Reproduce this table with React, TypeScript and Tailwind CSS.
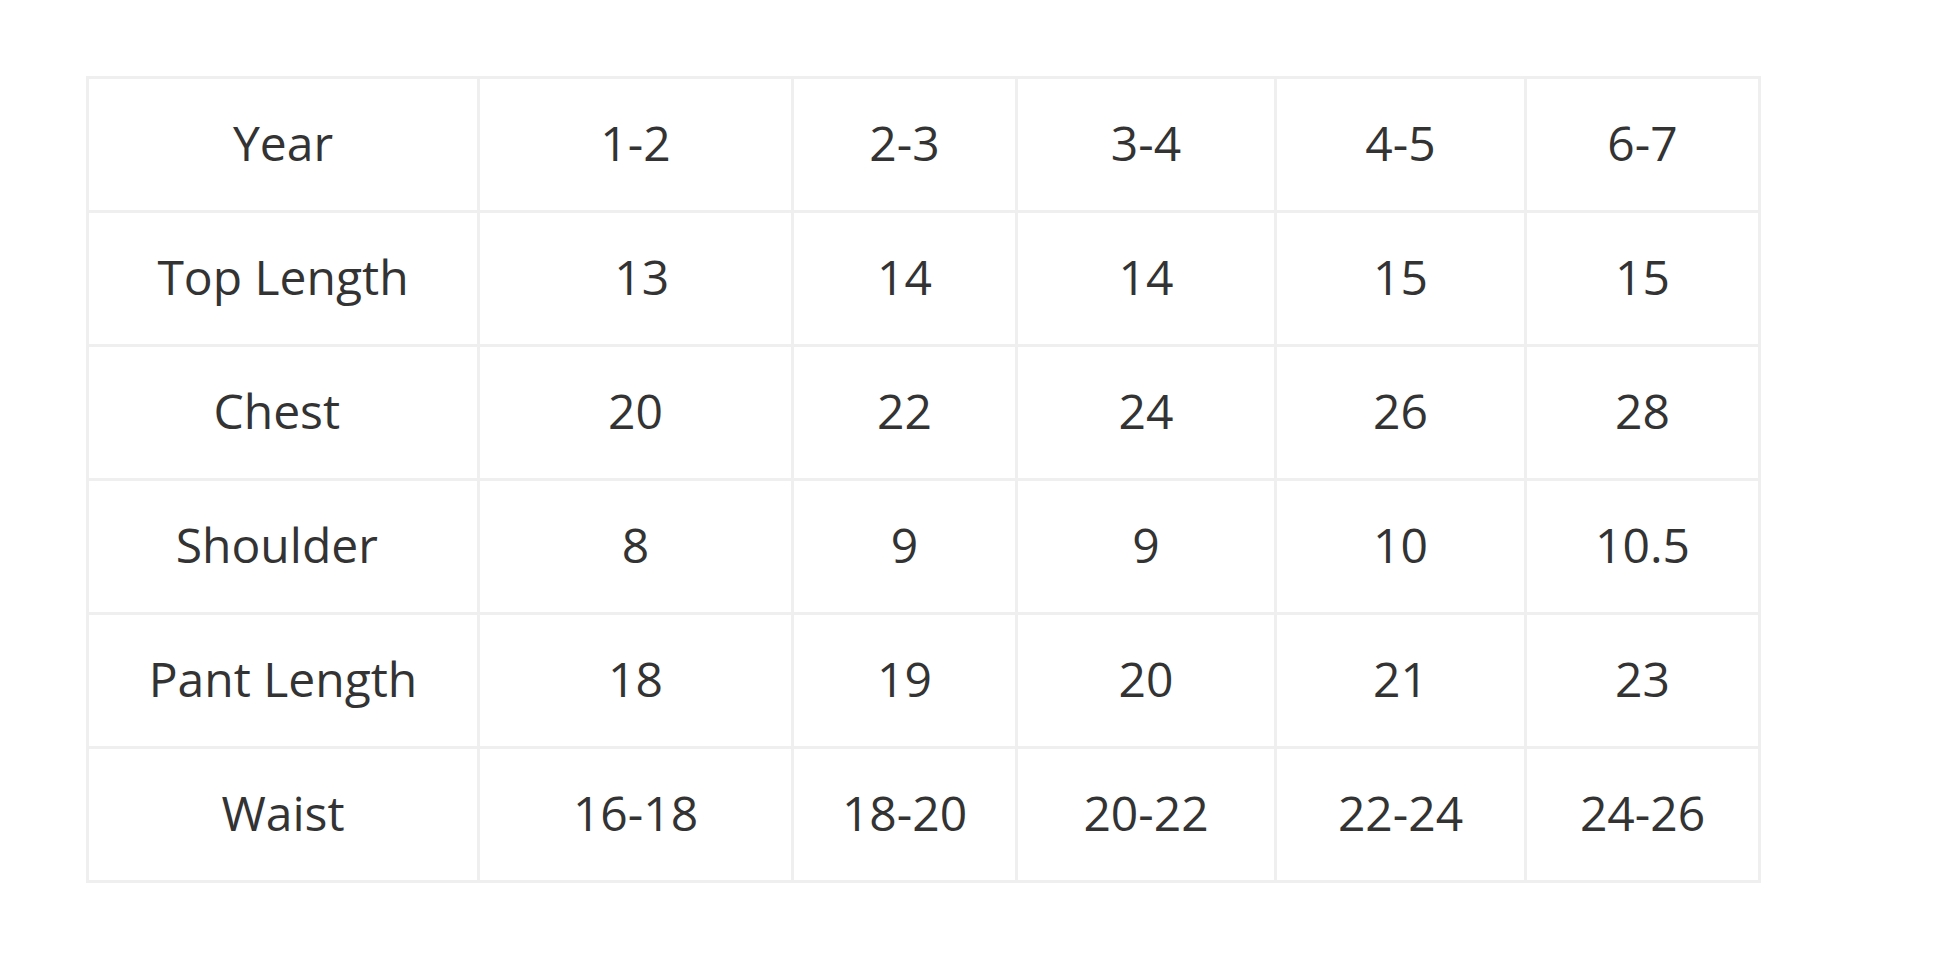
const cols = ['w-[391px]', 'w-[314px]', 'w-[224px]', 'w-[259px]', 'w-[250px]', 'w-[234px]'];

const rows: string[][] = [
  ['Year', '1-2', '2-3', '3-4', '4-5', '6-7'],
  ['Top Length', '\u00a013', '14', '14', '15', '15'],
  ['Chest\u00a0', '20', '22', '24', '26', '28'],
  ['Shoulder\u00a0', '8', '9', '9', '10', '10.5'],
  ['Pant Length', '18', '19', '20', '21', '23'],
  ['Waist', '16-18', '18-20', '20-22', '22-24', '24-26'],
];

export default function App() {
  return (
    <div className="min-h-screen bg-white pl-[86px] pt-[76px]">
      <table
        className="table-fixed border-collapse text-[#333333] text-[48px]"
        style={{ fontFamily: '"Open Sans", "Liberation Sans", sans-serif' }}
      >
        <colgroup>
          {cols.map((c, i) => (
            <col key={i} className={c} />
          ))}
        </colgroup>
        <tbody>
          {rows.map((row, r) => (
            <tr key={r} className="h-[134px]">
              {row.map((cell, c) => (
                <td
                  key={c}
                  className="border-[3px] border-[#efefef] pb-1 text-center align-middle font-normal leading-none whitespace-nowrap"
                >
                  {cell}
                </td>
              ))}
            </tr>
          ))}
        </tbody>
      </table>
    </div>
  );
}
